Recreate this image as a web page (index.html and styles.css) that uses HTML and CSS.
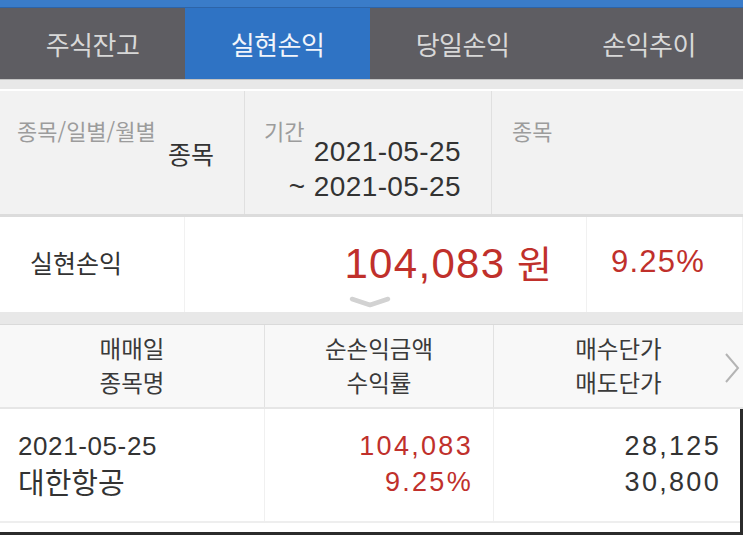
FILE: index.html
```html
<!DOCTYPE html>
<html lang="ko">
<head>
<meta charset="utf-8">
<link rel="stylesheet" href="styles.css">
</head>
<body>
<div class="topbar"></div>
<nav class="tabs">
  <div class="tab">주식잔고</div>
  <div class="tab active">실현손익</div>
  <div class="tab">당일손익</div>
  <div class="tab">손익추이</div>
</nav>
<div class="gap"></div>
<section class="filters">
  <div class="fcell">
    <div class="flabel">종목/일별/월별</div>
    <div class="fvalue">종목</div>
  </div>
  <div class="fcell">
    <div class="flabel">기간</div>
    <div class="fdates">
      <div>2021-05-25</div>
      <div>~ 2021-05-25</div>
    </div>
  </div>
  <div class="fcell">
    <div class="flabel">종목</div>
  </div>
</section>
<section class="summary">
  <div class="scell slabel">실현손익</div>
  <div class="scell samount"><span class="amt"><span class="num">104,083</span> <span class="won">원</span></span></div>
  <div class="scell srate">9.25%</div>
  <svg class="chev-down" width="44" height="14" viewBox="0 0 44 14"><path d="M4 4 L22 10 L40 4" fill="none" stroke="#d2d2d2" stroke-width="4.5" stroke-linecap="round" stroke-linejoin="round"/></svg>
</section>
<div class="band"></div>
<section class="thead">
  <div class="hcell"><div class="hl">매매일</div><div class="hl">종목명</div></div>
  <div class="hcell"><div class="hl">순손익금액</div><div class="hl">수익률</div></div>
  <div class="hcell"><div class="hl">매수단가</div><div class="hl">매도단가</div></div>
  <svg class="chev-right" width="18" height="32" viewBox="0 0 18 32"><path d="M3 2 L15 16 L3 30" fill="none" stroke="#b4b4b4" stroke-width="2"/></svg>
</section>
<section class="tbody">
  <div class="row">
    <div class="dcell c1">
      <div class="d-date">2021-05-25</div>
      <div class="d-name">대한항공</div>
    </div>
    <div class="dcell c2 red">
      <div>104,083</div>
      <div>9.25%</div>
    </div>
    <div class="dcell c3">
      <div>28,125</div>
      <div>30,800</div>
    </div>
  </div>
</section>
</body>
</html>
```
FILE: styles.css
```css
html, body {
  margin: 0;
  padding: 0;
}
body {
  width: 743px;
  height: 539px;
  overflow: hidden;
  background: #ffffff;
  font-family: "Noto Sans CJK KR", "Liberation Sans", sans-serif;
  color: #333333;
}
.topbar {
  height: 7px;
  background: #3a7cc9;
  border-bottom: 1px solid #2d64a8;
}
.tabs {
  display: grid;
  grid-template-columns: 185px 185px 185px 188px;
  height: 71px;
  background: #5e5d62;
}
.tab {
  display: flex;
  align-items: center;
  justify-content: center;
  font-size: 26px;
  letter-spacing: -0.5px;
  color: #d8d8d8;
}
.tab.active {
  background: #2f73c4;
  color: #f2f5fb;
}
.gap {
  height: 9px;
  background: #e8e8e8;
  border-top: 1px solid #c4c4c4;
  border-bottom: 2px solid #ffffff;
}
.filters {
  display: grid;
  grid-template-columns: 245px 247px 1fr;
  height: 123px;
  background: #f2f2f2;
  border-bottom: 3px solid #dcdcdc;
}
.fcell {
  border-right: 1px solid #e0e0e0;
  padding: 26px 0 0 17px;
  display: flex;
  flex-direction: column;
}
.fcell:nth-child(2) { padding-left: 19px; }
.fcell:last-child { border-right: none; padding-left: 20px; }
.flabel {
  font-size: 22px;
  line-height: 26px;
  color: #9c9c9c;
}
.fvalue {
  align-self: flex-end;
  margin-right: 30px;
  margin-top: -8px;
  font-size: 25px;
  line-height: 36px;
  color: #333333;
}
.fdates {
  align-self: flex-end;
  margin-right: 30px;
  margin-top: -9px;
  font-family: "Liberation Sans", sans-serif;
  font-size: 28px;
  letter-spacing: 0.4px;
  line-height: 35px;
  color: #333333;
  text-align: right;
}
.summary {
  position: relative;
  display: grid;
  grid-template-columns: 185px 402px 1fr;
  height: 95px;
  background: #ffffff;
}
.scell {
  display: flex;
  align-items: center;
  border-right: 1px solid #f1f1f1;
  padding-bottom: 6px;
}
.scell:last-child { border-right: none; }
.slabel {
  padding-left: 30px;
  font-size: 25px;
  color: #333333;
}
.samount {
  justify-content: flex-end;
  padding-right: 34px;
  color: #c0302b;
}
.amt {
  font-family: "Liberation Sans", sans-serif;
  font-size: 42px;
  white-space: pre;
}
.amt .num {
  letter-spacing: 1.3px;
}
.amt .won {
  font-family: "Noto Sans CJK KR", sans-serif;
  font-size: 38px;
}
.srate {
  padding-left: 24px;
  font-family: "Liberation Sans", sans-serif;
  font-size: 31px;
  letter-spacing: 1.2px;
  color: #c0302b;
}
.chev-down {
  position: absolute;
  left: 348px;
  top: 78px;
}
.band {
  height: 12px;
  background: #e8e8e8;
  border-bottom: 1px solid #dadada;
}
.thead {
  position: relative;
  display: grid;
  grid-template-columns: 265px 229px 1fr;
  height: 82px;
  background: #f8f8f8;
  border-bottom: 2px solid #e6e6e6;
}
.hcell {
  display: flex;
  flex-direction: column;
  align-items: center;
  justify-content: center;
  text-align: center;
  color: #3a3a3a;
  border-right: 1px solid #e2e2e2;
  padding-bottom: 3px;
}
.hl {
  font-size: 23.5px;
  line-height: 34px;
}
.hcell:nth-child(3) { border-right: none; }
.chev-right {
  position: absolute;
  right: 2px;
  top: 27px;
}
.tbody {
  height: 126px;
  border-right: 3px solid #2b2b2b;
  border-bottom: 3px solid #2b2b2b;
  box-sizing: border-box;
}
.row {
  display: grid;
  grid-template-columns: 265px 229px 1fr;
  height: 112px;
  border-bottom: 2px solid #eeeeee;
}
.dcell {
  display: flex;
  flex-direction: column;
  justify-content: center;
  border-right: 1px solid #f0f0f0;
  font-family: "Liberation Sans", sans-serif;
  font-size: 27px;
  letter-spacing: 2.3px;
  line-height: 36px;
  padding-bottom: 2px;
}
.dcell.c1 {
  padding-left: 18px;
  letter-spacing: 0;
}
.d-date {
  font-size: 26px;
  letter-spacing: 0.6px;
  line-height: 34px;
}
.d-name {
  font-family: "Noto Sans CJK KR", sans-serif;
  font-size: 29px;
  letter-spacing: 0;
  line-height: 36px;
}
.dcell.c2 {
  align-items: flex-end;
  padding-right: 20px;
}
.dcell.c3 {
  align-items: flex-end;
  padding-right: 19px;
  border-right: none;
}
.red { color: #c0302b; }
```
